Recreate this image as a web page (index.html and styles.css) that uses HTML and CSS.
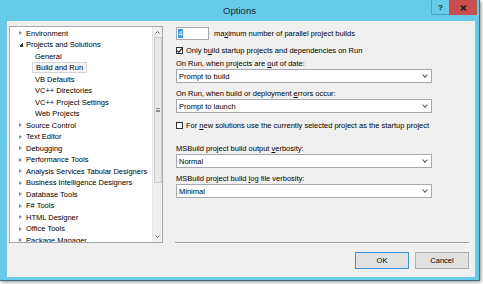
FILE: index.html
```html
<!DOCTYPE html>
<html lang="en">
<head>
  <meta charset="UTF-8">
  <title>Options</title>
  <link rel="stylesheet" href="styles.css">
</head>
<body>
  <div class="window">
    <!-- title bar -->
    <div class="titlebar">
      <div></div>
      <div class="title">Options</div>
      <div class="caption-btns">
        <div class="cap-btn help">?</div>
        <div class="cap-btn close">
          <svg width="7" height="6" viewBox="0 0 7 6"><path d="M1 0.5 L6 5.5 M6 0.5 L1 5.5" stroke="#1c1c1c" stroke-width="1.6"/></svg>
        </div>
      </div>
    </div>

    <div class="client">
      <!-- tree -->
      <div class="tree-col">
        <div class="tree">
          <ul class="tree-list">
            <li class="node"><span class="exp"></span>Environment</li>
            <li class="node"><span class="exp open"></span>Projects and Solutions</li>
            <li class="node child">General</li>
            <li class="node child"><span class="sel">Build and Run</span></li>
            <li class="node child">VB Defaults</li>
            <li class="node child">VC++ Directories</li>
            <li class="node child">VC++ Project Settings</li>
            <li class="node child">Web Projects</li>
            <li class="node"><span class="exp"></span>Source Control</li>
            <li class="node"><span class="exp"></span>Text Editor</li>
            <li class="node"><span class="exp"></span>Debugging</li>
            <li class="node"><span class="exp"></span>Performance Tools</li>
            <li class="node"><span class="exp"></span>Analysis Services Tabular Designers</li>
            <li class="node"><span class="exp"></span>Business Intelligence Designers</li>
            <li class="node"><span class="exp"></span>Database Tools</li>
            <li class="node"><span class="exp"></span>F# Tools</li>
            <li class="node"><span class="exp"></span>HTML Designer</li>
            <li class="node"><span class="exp"></span>Office Tools</li>
            <li class="node"><span class="exp"></span>Package Manager</li>
          </ul>
          <div class="scrollbar">
            <div class="sb-arrow">
              <svg width="5" height="3" viewBox="0 0 5 3"><path d="M0.5 2.5 L2.5 0.5 L4.5 2.5" stroke="#606060" fill="none"/></svg>
            </div>
            <div class="sb-track">
              <div class="sb-thumb"><span class="grip"></span></div>
            </div>
            <div class="sb-arrow">
              <svg width="5" height="3" viewBox="0 0 5 3"><path d="M0.5 0.5 L2.5 2.5 L4.5 0.5" stroke="#606060" fill="none"/></svg>
            </div>
          </div>
        </div>
      </div>

      <!-- settings panel -->
      <div class="panel">
        <div class="options">
          <div class="count-row">
            <div class="count-box"><span class="count-sel">4</span></div>
            <span>ma<u>x</u>imum number of parallel project builds</span>
          </div>

          <div class="check-row first">
            <span class="checkbox checked">
              <svg width="7" height="7" viewBox="0 0 7 7"><path d="M1.2 3.6 L2.9 5.3 L5.9 1.4" stroke="#222" stroke-width="1.2" fill="none"/></svg>
            </span>
            <span>Only b<u>u</u>ild startup projects and dependencies on Run</span>
          </div>

          <div class="field-label">On Run, when projects are <u>o</u>ut of date:</div>
          <div class="select"><span>Prompt to build</span><span class="chev"></span></div>

          <div class="field-label gap">On Run, when build or deployment <u>e</u>rrors occur:</div>
          <div class="select"><span>Prompt to launch</span><span class="chev"></span></div>

          <div class="check-row second">
            <span class="checkbox"></span>
            <span>For <u>n</u>ew solutions use the currently selected project as the startup project</span>
          </div>

          <div class="field-label wide-gap">MSBuild project build output <u>v</u>erbosity:</div>
          <div class="select"><span>Normal</span><span class="chev"></span></div>

          <div class="field-label gap">MSBuild project build <u>l</u>og file verbosity:</div>
          <div class="select"><span>Minimal</span><span class="chev"></span></div>
        </div>

        <div class="separator"></div>

        <div class="buttons">
          <button class="default">OK</button>
          <button>Cancel</button>
        </div>
      </div>
    </div>
  </div>
</body>
</html>
```

FILE: styles.css
```css
* {
  margin: 0;
  padding: 0;
  box-sizing: border-box;
}

body {
  font-family: 'Liberation Sans', Arial, sans-serif;
  font-size: 7.5px;
  color: #000;
  background: #fff;
  width: 483px;
  height: 284px;
  overflow: hidden;
}

/* window frame */
.window {
  width: 480px;
  height: 281px;
  background: #65cbe9;
  border-right: 1px solid #3f6f80;
  border-bottom: 1px solid #3f6f80;
  box-shadow: 1px 1px 3px rgba(0, 0, 0, 0.45);
  display: flex;
  flex-direction: column;
}

.titlebar {
  height: 21px;
  display: grid;
  grid-template-columns: 1fr auto 1fr;
  align-items: start;
  padding-right: 2px;
}

.title {
  font-size: 9.6px;
  color: #1e2a30;
  line-height: 22px;
  padding-left: 2px;
}

.caption-btns {
  justify-self: end;
  display: flex;
}

.cap-btn {
  height: 15px;
  display: flex;
  align-items: center;
  justify-content: center;
}

.cap-btn.help {
  width: 18px;
  font-weight: bold;
  font-size: 8px;
  color: #1c1c1c;
  border: 1px solid #4aa3c2;
  border-top: none;
  border-right: none;
}

.cap-btn.close {
  width: 28px;
  background: #c7504e;
}

/* client area */
.client {
  margin: 0 4px 0 7px;
  height: 256px;
  background: #f0f0f0;
  display: flex;
}

.tree-col {
  padding: 5px 0 0 2px;
}

.tree {
  width: 154px;
  height: 217px;
  background: #fff;
  border: 1px solid #a5a8ae;
  display: flex;
  overflow: hidden;
}

.tree-list {
  list-style: none;
  flex: 1;
  padding-top: 0.5px;
  overflow: hidden;
}

.node {
  height: 11.5px;
  line-height: 11.5px;
  padding-left: 5px;
  display: flex;
  align-items: center;
  white-space: nowrap;
}

.node.child {
  padding-left: 25px;
}

.exp {
  width: 11px;
  height: 11px;
  display: flex;
  align-items: center;
  justify-content: center;
}

.exp::before {
  content: '';
  width: 0;
  height: 0;
  border-top: 2.5px solid transparent;
  border-bottom: 2.5px solid transparent;
  border-left: 3.5px solid #8a8a8a;
}

.exp::after {
  content: '';
  position: absolute;
}

.exp.open::before {
  border: none;
  width: 4px;
  height: 4px;
  background: linear-gradient(135deg, transparent 50%, #3a3a3a 50%);
}

.sel {
  display: inline-block;
  margin-left: -3px;
  padding: 0 3px;
  height: 11px;
  line-height: 10px;
  border: 1px solid #d6d6d6;
  background: #f6f6f6;
}

/* scrollbar */
.scrollbar {
  width: 10px;
  background: #f0f0f0;
  border-left: 1px solid #e6e6e6;
  display: flex;
  flex-direction: column;
}

.sb-arrow {
  height: 11px;
  display: flex;
  align-items: center;
  justify-content: center;
}

.sb-track {
  flex: 1;
  padding: 0 0.5px;
  display: flex;
  flex-direction: column;
}

.sb-thumb {
  margin-top: -1px;
  height: 146px;
  background: #e8e8e8;
  border: 1px solid #cdcdcd;
  display: flex;
  align-items: center;
  justify-content: center;
}

.grip {
  width: 4px;
  height: 4px;
  border-top: 1px solid #8c8c8c;
  border-bottom: 1px solid #8c8c8c;
  background: linear-gradient(#8c8c8c, #8c8c8c) center / 100% 1px no-repeat;
}

/* right panel */
.panel {
  flex: 1;
  margin-left: 12px;
  padding: 6px 6px 8px 0;
  display: flex;
  flex-direction: column;
}

.options {
  flex: 1;
  padding-left: 1px;
}

.count-row {
  height: 13px;
  display: flex;
  align-items: center;
  gap: 5px;
}

.count-box {
  width: 33px;
  height: 13px;
  background: #fff;
  border: 1px solid #a5a8ae;
  padding: 1px 0 0 1px;
}

.count-sel {
  display: inline-block;
  width: 5px;
  height: 9px;
  line-height: 9px;
  background: #3399ff;
  color: #fff;
  font-size: 7px;
  text-align: center;
}

.check-row {
  height: 13px;
  display: flex;
  align-items: center;
  gap: 3px;
}

.check-row.first {
  margin-top: 4px;
}

.check-row.second {
  margin-top: 6px;
}

.checkbox {
  width: 7px;
  height: 7px;
  background: #fff;
  border: 1px solid #333;
  display: flex;
  align-items: center;
  justify-content: center;
}

.checkbox svg {
  flex: none;
}

.field-label {
  height: 11px;
  line-height: 11px;
  margin-top: 1px;
}

.field-label.gap {
  margin-top: 5px;
}

.field-label.wide-gap {
  margin-top: 11px;
}

.select {
  width: 256px;
  height: 14px;
  background: #fff;
  border: 1px solid #a5a8ae;
  padding: 0 4px 0 2px;
  display: flex;
  align-items: center;
  justify-content: space-between;
}

.chev {
  width: 4px;
  height: 4px;
  border-right: 1px solid #555;
  border-bottom: 1px solid #555;
  transform: translateY(-1px) rotate(45deg);
}

.separator {
  border-top: 1px solid #a0a0a0;
  border-bottom: 1px solid #fff;
}

.buttons {
  margin-top: 8px;
  display: flex;
  justify-content: flex-end;
  gap: 6px;
}

button {
  width: 54px;
  height: 17px;
  font-family: inherit;
  font-size: 7.5px;
  color: #000;
  background: #e1e1e1;
  border: 1px solid #adadad;
}

button.default {
  border-color: #3c8fd6;
}

u {
  text-decoration-thickness: 0.6px;
  text-underline-offset: 1px;
}
```
